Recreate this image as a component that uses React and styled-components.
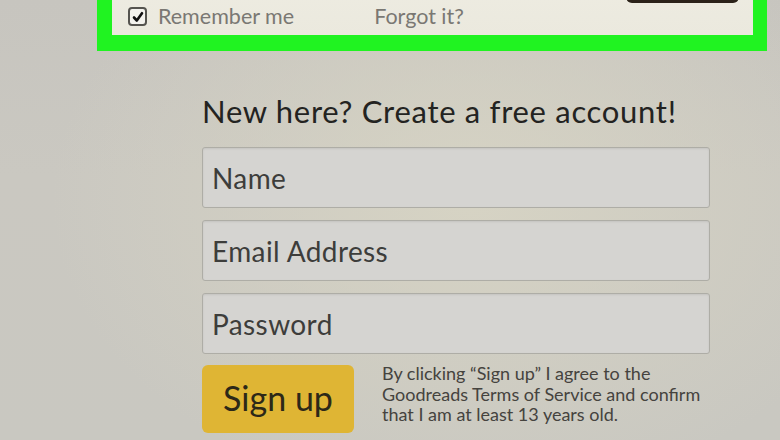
import React from 'react';
import styled, { createGlobalStyle } from 'styled-components';

const GlobalStyle = createGlobalStyle`
  html, body {
    margin: 0;
    padding: 0;
    overflow: hidden;
  }
  body {
    font-family: Lato, "Open Sans", sans-serif;
  }
`;

const Page = styled.div`
  width: 780px;
  height: 440px;
  overflow: hidden;
  display: flex;
  flex-direction: column;
  background:
    radial-gradient(ellipse 420px 300px at 470px 200px, rgba(215, 212, 196, 0.95), rgba(215, 212, 196, 0) 100%),
    linear-gradient(180deg, #c7c5bf 0%, #cac8c1 40%, #c9c8c1 100%);
`;

const LoginPanel = styled.section`
  margin: -40px 0 0 97px;
  width: 670px;
  box-sizing: border-box;
  border-style: solid;
  border-color: #20f321;
  border-width: 0 14px 16px 15px;
`;

const Cream = styled.div`
  height: 75px;
  box-sizing: border-box;
  padding: 0 14px 0 16px;
  display: flex;
  flex-direction: column;
  background: linear-gradient(180deg, #efede3 0%, #ebe9de 100%);
`;

const TopRow = styled.div`
  height: 43px;
  display: flex;
  justify-content: flex-end;
`;

const SignInButton = styled.button`
  width: 113px;
  height: 43px;
  border: 0;
  border-radius: 6px;
  background: #2b2219;
  padding: 0;
`;

const RememberRow = styled.div`
  flex: 1;
  display: flex;
  align-items: center;
  padding-bottom: 5px;
`;

const Check = styled.span`
  width: 19px;
  height: 19px;
  box-sizing: border-box;
  border: 2px solid #55544f;
  border-radius: 4px;
  background: #f4f3ee;
  display: inline-flex;
  align-items: center;
  justify-content: center;
  margin-right: 11px;
`;

const MutedText = styled.span`
  font-size: 21.5px;
  color: #7a7873;
  line-height: 1;
  margin-left: ${(p) => p.$offset || 0}px;
`;

const Signup = styled.section`
  margin: 42px 0 0 202px;
  width: 508px;
  display: flex;
  flex-direction: column;
`;

const Heading = styled.h2`
  margin: 0 0 18px;
  font-size: 31px;
  font-weight: 400;
  letter-spacing: 0.7px;
  line-height: 36px;
  color: #232321;
  white-space: nowrap;
`;

const Fields = styled.div`
  display: flex;
  flex-direction: column;
  gap: 12px;
`;

const Field = styled.input`
  height: 61px;
  width: 100%;
  box-sizing: border-box;
  margin: 0;
  padding: 0 10px 0 9px;
  border: 1px solid #aeada6;
  border-radius: 3px;
  background: #d5d4d1;
  box-shadow: inset 0 1px 2px rgba(0, 0, 0, 0.08);
  font-family: Lato, "Open Sans", sans-serif;
  font-size: 28px;
  letter-spacing: 0.4px;
  color: #3a3a38;
  outline: none;

  &::placeholder {
    color: #3d3d3b;
    opacity: 1;
  }
`;

const Footer = styled.div`
  display: flex;
  align-items: flex-start;
  margin-top: 11px;
`;

const SignUpButton = styled.button`
  width: 152px;
  height: 68px;
  flex: none;
  border: 0;
  border-radius: 6px;
  background: #dfb534;
  color: #2c2818;
  font-family: Lato, "Open Sans", sans-serif;
  font-size: 34px;
  padding: 0 0 4px;
`;

const Terms = styled.p`
  margin: -2px 0 0 28px;
  font-size: 18px;
  line-height: 20.5px;
  color: #45433e;
`;

const CheckMark = () => (
  <svg width="12" height="12" viewBox="0 0 12 12">
    <path d="M2 6.5 L4.8 9.5 L10 2.2" fill="none" stroke="#111" strokeWidth="2.6" strokeLinecap="round" strokeLinejoin="round" />
  </svg>
);

export default function App() {
  return (
    <Page>
      <GlobalStyle />
      <LoginPanel>
        <Cream>
          <TopRow>
            <SignInButton aria-label="Sign in" />
          </TopRow>
          <RememberRow>
            <Check>
              <CheckMark />
            </Check>
            <MutedText>Remember me</MutedText>
            <MutedText $offset={80}>Forgot it?</MutedText>
          </RememberRow>
        </Cream>
      </LoginPanel>
      <Signup>
        <Heading>New here? Create a free account!</Heading>
        <Fields>
          <Field placeholder="Name" />
          <Field placeholder="Email Address" />
          <Field type="password" placeholder="Password" />
        </Fields>
        <Footer>
          <SignUpButton>Sign up</SignUpButton>
          <Terms>
            By clicking “Sign up” I agree to the
            <br />
            Goodreads Terms of Service and confirm
            <br />
            that I am at least 13 years old.
          </Terms>
        </Footer>
      </Signup>
    </Page>
  );
}
